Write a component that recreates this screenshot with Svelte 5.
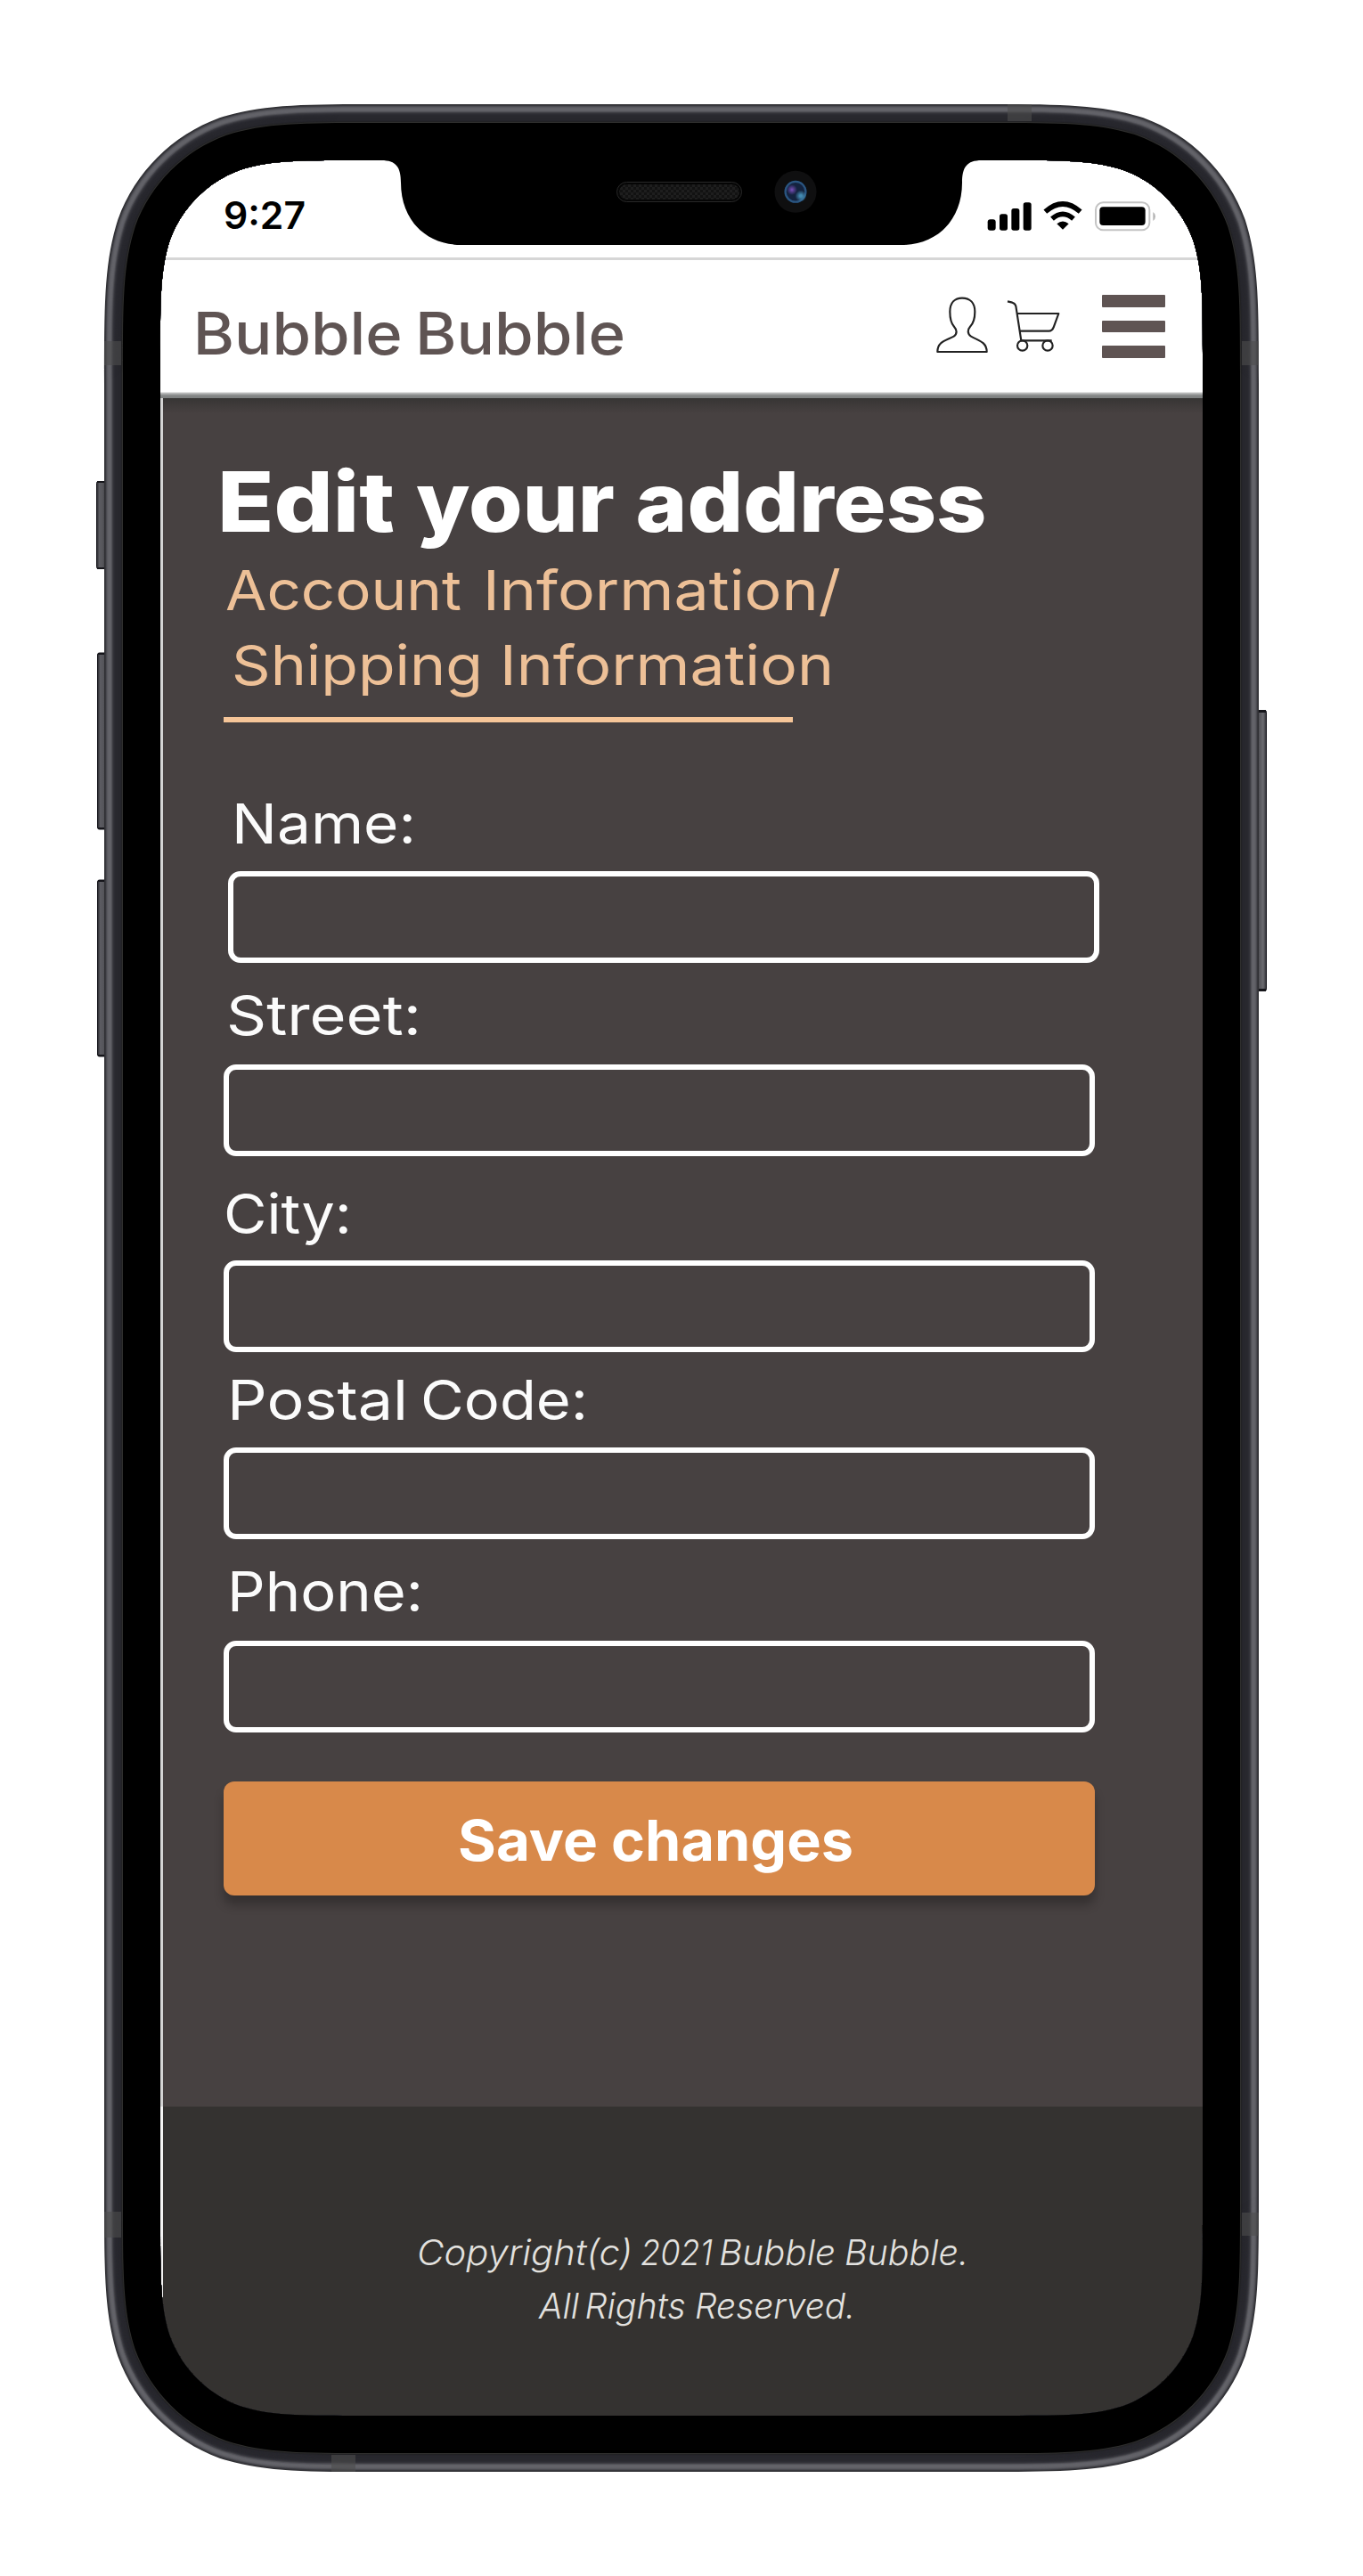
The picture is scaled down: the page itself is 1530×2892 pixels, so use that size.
<script>
  // Each text line is a list of words: [text, x, width]
  const brand = [['Bubble', 0.7, 235], ['Bubble', 250, 236]];
  const title = [['Edit', -7, 199], ['your', 216, 223], ['address', 462.5, 394]];
  const account = [['Account', 2, 265], ['Information/', 291, 402]];
  const shipping = [['Shipping', 9, 282], ['Information', 310, 375]];
  const copyright = [['Copyright(c)', 11, 242], ['2021', 262, 81], ['Bubble', 350, 131], ['Bubble.', 491, 139]];
  const rights = [['All', 18, 45], ['Rights', 69.5, 113], ['Reserved.', 193, 180]];

  const fields = [
    { id: 'name', words: [['Name:', 9, 207]] },
    { id: 'street', words: [['Street:', 3, 219]] },
    { id: 'city', words: [['City:', 0, 144]] },
    { id: 'postal', words: [['Postal', 4, 203], ['Code:', 221, 188]] },
    { id: 'phone', words: [['Phone:', 4, 220]] },
  ];

  // Continuous-curvature rounded rectangle
  function squircle(x0, y0, x1, y1, r) {
    const a = 1.528665 * r, b = 1.088493 * r, c = 0.868407 * r, d = 0.631494 * r;
    const e = 0.074911 * r, f = 0.372824 * r, g = 0.16906 * r;
    return `M${x0 + a} ${y0}H${x1 - a}` +
      `C${x1 - b} ${y0} ${x1 - c} ${y0} ${x1 - d} ${y0 + e}` +
      `C${x1 - f} ${y0 + g} ${x1 - g} ${y0 + f} ${x1 - e} ${y0 + d}` +
      `C${x1} ${y0 + c} ${x1} ${y0 + b} ${x1} ${y0 + a}V${y1 - a}` +
      `C${x1} ${y1 - b} ${x1} ${y1 - c} ${x1 - e} ${y1 - d}` +
      `C${x1 - g} ${y1 - f} ${x1 - f} ${y1 - g} ${x1 - d} ${y1 - e}` +
      `C${x1 - c} ${y1} ${x1 - b} ${y1} ${x1 - a} ${y1}H${x0 + a}` +
      `C${x0 + b} ${y1} ${x0 + c} ${y1} ${x0 + d} ${y1 - e}` +
      `C${x0 + f} ${y1 - g} ${x0 + g} ${y1 - f} ${x0 + e} ${y1 - d}` +
      `C${x0} ${y1 - c} ${x0} ${y1 - b} ${x0} ${y1 - a}V${y0 + a}` +
      `C${x0} ${y0 + b} ${x0} ${y0 + c} ${x0 + e} ${y0 + d}` +
      `C${x0 + g} ${y0 + f} ${x0 + f} ${y0 + g} ${x0 + d} ${y0 + e}` +
      `C${x0 + c} ${y0} ${x0 + b} ${y0} ${x0 + a} ${y0}Z`;
  }

  const rim = [
    '#2f2f33', '#38383d', '#4a4a50', '#59595f', '#606066', '#636369', '#636369',
    '#5f5f65', '#505056', '#3d3d43', '#323238', '#2c2c33', '#29292f', '#28282e',
    '#28282e', '#27272d', '#27272d', '#27272d', '#25252b', '#222224', '#2e2e2d', '#000000',
  ];
  const hole = squircle(180, 180, 1350, 2712, 142);
  const rings = rim.map((color, i) => ({
    color,
    d: squircle(117 + i, 117 + i, 1413 - i, 2775 - i, 205 - i) + hole,
  }));
</script>

{#snippet line(words, y, width, height)}
  <svg {width} {height}>
    <text {y}>
      {#each words as [word, x, length]}
        <tspan {x} textLength={length} lengthAdjust="spacingAndGlyphs">{word}</tspan>
      {/each}
    </text>
  </svg>
{/snippet}

<main class="stage">
  <div class="screen">
    <div class="status">
      <div class="time">{@render line([['9:27', 0, 92]], 40, 100, 50)}</div>
      <svg class="signals" viewBox="320 160 580 115" width="193.33" height="38.33">
        <rect x="325" y="230" width="27" height="37" rx="9" />
        <rect x="365" y="212" width="27" height="55" rx="8" />
        <rect x="405" y="193" width="27" height="74" rx="8" />
        <rect x="445" y="173" width="27" height="94" rx="8" />
        <path d="M519 204Q578 152 637 204" fill="none" stroke="#000" stroke-width="17" />
        <path d="M542 228Q578 196 614 228" fill="none" stroke="#000" stroke-width="17" />
        <path d="M558 245Q578 228 598 245L578 264Z" />
        <rect x="689" y="173" width="181" height="93" rx="25" fill="none" stroke="#c4c4c4" stroke-width="6" />
        <rect x="702" y="188" width="154" height="62" rx="12" />
        <path d="M882 205Q890 210 890 220Q890 230 882 235Z" fill="#b5b5b5" />
      </svg>
    </div>

    <header class="header">
      <div class="brand">{@render line(brand, 61, 490, 80)}</div>
      <svg class="user" viewBox="150 480 180 210" width="60" height="70">
        <path d="M157 675C157 640 185 638 212 623C225 614 222 600 213 590C201 577 199 560 199 540C199 510 215 494 240 494C266 494 283 510 283 540C283 560 280 577 267 590C258 600 257 614 270 623C297 638 323 642 323 675Z" />
      </svg>
      <svg class="cart" viewBox="385 480 190 210" width="63.33" height="70">
        <path d="M391 505L407 509Q417 512 419 521L437 637H540M424 546H563L547 590Q542 605 530 605H433" />
        <circle cx="441" cy="654" r="17" />
        <circle cx="526" cy="654" r="17" />
      </svg>
      <div class="burger"><i></i><i></i><i></i></div>
    </header>

    <section class="content">
      <div class="title">{@render line(title, 96.5, 900, 120)}</div>
      <div class="crumb">{@render line(account, 64.5, 800, 86)}</div>
      <div class="crumb">{@render line(shipping, 63, 800, 86)}</div>
      <div class="rule"></div>

      <form class="form">
        {#each fields as field}
          <div class="field {field.id}">
            <label for={field.id}>{@render line(field.words, 57, 480, 70)}</label>
            <input id={field.id} type="text" />
          </div>
        {/each}
        <button type="button">
          {@render line([['Save', 4, 157], ['changes', 176, 272]], 64, 452, 80)}
        </button>
      </form>
    </section>

    <footer class="footer">
      {@render line(copyright, 43, 640, 60)}
      {@render line(rights, 42.7, 380, 60)}
    </footer>
  </div>

  <svg class="frame" viewBox="0 0 1530 2892" width="1530" height="2892" aria-hidden="true">
    <defs>
      <linearGradient id="key" x1="0" x2="1" y1="0" y2="0">
        <stop offset="0" stop-color="#25252a" />
        <stop offset="0.25" stop-color="#5b5b61" />
        <stop offset="0.55" stop-color="#56565b" />
        <stop offset="1" stop-color="#36363b" />
      </linearGradient>
      <linearGradient id="keyRight" x1="1" x2="0" y1="0" y2="0">
        <stop offset="0" stop-color="#303035" />
        <stop offset="0.3" stop-color="#6b6b70" />
        <stop offset="0.55" stop-color="#5b5b60" />
        <stop offset="1" stop-color="#39393e" />
      </linearGradient>
      <pattern id="mesh" width="6" height="6" patternUnits="userSpaceOnUse">
        <rect width="6" height="6" fill="#121212" />
        <rect width="3" height="3" fill="#1e1e1e" />
        <rect x="3" y="3" width="3" height="3" fill="#1e1e1e" />
      </pattern>
      <radialGradient id="violet"><stop offset="0" stop-color="#7a50ba" /><stop offset="1" stop-color="#7048ad" stop-opacity="0" /></radialGradient>
      <radialGradient id="cyan"><stop offset="0.2" stop-color="#438ab0" /><stop offset="1" stop-color="#438ab0" stop-opacity="0" /></radialGradient>
    </defs>

    <g stroke="#111117" stroke-width="1">
      <rect x="108.5" y="540.5" width="12" height="98" rx="2" fill="url(#key)" />
      <rect x="109.5" y="733" width="12" height="198" rx="2" fill="url(#key)" />
      <rect x="109.5" y="988" width="12" height="198" rx="2" fill="url(#key)" />
      <rect x="1409.5" y="797.5" width="12" height="315" rx="2" fill="url(#keyRight)" />
    </g>
    <g fill="#15151a">
      <rect x="109" y="540" width="8" height="2" /><rect x="109" y="637" width="8" height="2" />
      <rect x="110" y="733" width="7" height="2" /><rect x="110" y="929" width="7" height="2" />
      <rect x="110" y="988" width="7" height="2" /><rect x="110" y="1184" width="7" height="2" />
      <rect x="1413" y="797" width="8" height="3" /><rect x="1413" y="1110" width="8" height="3" />
    </g>

    {#each rings as ring}
      <path d={ring.d} fill={ring.color} fill-rule="evenodd" />
    {/each}

    <g fill="#4c4c4c" fill-opacity="0.6">
      <rect x="117" y="383" width="19" height="27" />
      <rect x="1394" y="383" width="19" height="27" />
      <rect x="117" y="2483" width="19" height="29" />
      <rect x="1394" y="2484" width="19" height="26" />
      <rect x="372" y="2756" width="27" height="19" />
      <rect x="1131" y="117" width="27" height="19" />
    </g>

    <path d="M428 179V180C445 180 450 188 450 205C450 247 478 275 518 275H1012C1052 275 1080 247 1080 205C1080 188 1085 180 1102 180V179Z" fill="#000" />
    <rect x="692.5" y="204.5" width="140" height="22" rx="11" fill="#050505" stroke="#282828" />
    <rect x="695" y="207" width="135" height="17" rx="8.5" fill="url(#mesh)" />
    <circle cx="893" cy="215.3" r="23.5" fill="#0f0f10" />
    <circle cx="893" cy="215.3" r="12.5" fill="#14233f" />
    <circle cx="893" cy="215.3" r="11.4" fill="none" stroke="#2a5580" stroke-width="2.2" />
    <circle cx="889" cy="213" r="6" fill="url(#violet)" />
    <circle cx="899" cy="220" r="6.5" fill="url(#cyan)" />
  </svg>
</main>

<style>
  :global(body) {
    background: #fff;
  }

  svg {
    display: block;
    flex: none;
    overflow: visible;
  }

  .stage {
    position: relative;
    box-sizing: border-box;
    width: 1530px;
    height: 2892px;
    padding: 180px;
    overflow: hidden;
    font-family: Inter, 'Liberation Sans', sans-serif;
  }

  .frame {
    position: absolute;
    inset: 0;
    pointer-events: none;
  }

  .screen {
    display: flex;
    flex-direction: column;
    width: 1170px;
    height: 2532px;
    background: #fff;
  }

  .status {
    box-sizing: border-box;
    display: flex;
    flex: none;
    justify-content: space-between;
    height: 111.5px;
    padding: 37px 50px 0 71px;
    border-bottom: 3px solid #d6d6d6;
  }

  .time {
    font-size: 42px;
    font-weight: 600;
  }

  .signals {
    margin-top: 6.3px;
  }

  .header {
    box-sizing: border-box;
    display: flex;
    flex: none;
    align-items: flex-start;
    height: 155.5px;
    padding: 38.5px 42px 0 36px;
    background: linear-gradient(#fff 148px, #c4c5c5 149px, #858787 152px, #7d8080 155px);
  }

  .brand {
    margin-top: 7px;
    margin-right: auto;
    font-size: 66px;
    font-weight: 500;
    fill: #5f5453;
  }

  .user,
  .cart {
    fill: none;
    stroke: #222;
    stroke-width: 6.5;
    stroke-linejoin: round;
  }

  .cart {
    margin: 0 45px 0 18.3px;
  }

  .burger {
    display: flex;
    flex-direction: column;
    gap: 15px;
    width: 71px;
    margin-top: 1px;
  }

  .burger i {
    height: 13.5px;
    border-radius: 1px;
    background: #5f5453;
  }

  .content {
    box-sizing: border-box;
    flex: none;
    height: 1918px;
    padding: 53px 0 0 68px;
    border-left: 3px solid #d4d4d4;
    background: linear-gradient(#373534, #474141 17px);
  }

  .title {
    font-size: 93px;
    font-weight: 800;
    fill: #fff;
  }

  .crumb {
    font-size: 62px;
    fill: #edc097;
  }

  .rule {
    width: 639px;
    height: 6px;
    margin-top: 13px;
    background: #f6c598;
  }

  .form {
    display: flex;
    flex-direction: column;
    width: 978px;
    margin-top: 79px;
  }

  .field {
    display: flex;
    flex-direction: column;
    gap: 18px;
  }

  .field label {
    font-size: 62px;
    fill: #fbfbfb;
  }

  .field input {
    box-sizing: border-box;
    width: 978px;
    height: 103px;
    padding: 0 20px;
    border: 6px solid #fff;
    border-radius: 14px;
    outline: none;
    background: transparent;
    color: #fff;
    font: inherit;
    font-size: 56px;
  }

  .name input {
    margin-left: 5px;
  }

  .street {
    gap: 20px;
    margin-top: 24px;
  }

  .city {
    gap: 17px;
    margin-top: 30px;
  }

  .postal {
    margin-top: 19px;
  }

  .phone {
    gap: 20px;
    margin-top: 24px;
  }

  button {
    display: flex;
    justify-content: center;
    box-sizing: border-box;
    height: 128px;
    margin-top: 55px;
    padding: 25px 9px 0 0;
    border: 0;
    border-radius: 12px;
    background: #d8894a;
    box-shadow: 0 11px 11px rgba(0, 0, 0, 0.25);
    font-family: inherit;
    font-size: 63px;
    font-weight: 700;
    fill: #fff;
  }

  .footer {
    box-sizing: border-box;
    display: flex;
    flex: none;
    flex-direction: column;
    align-items: center;
    height: 347px;
    padding: 135px 0 0 21px;
    border-left: 3px solid #f4f4f4;
    background: #343230;
    font-size: 40px;
    font-style: italic;
    font-weight: 300;
    fill: #e2e1df;
  }
</style>
